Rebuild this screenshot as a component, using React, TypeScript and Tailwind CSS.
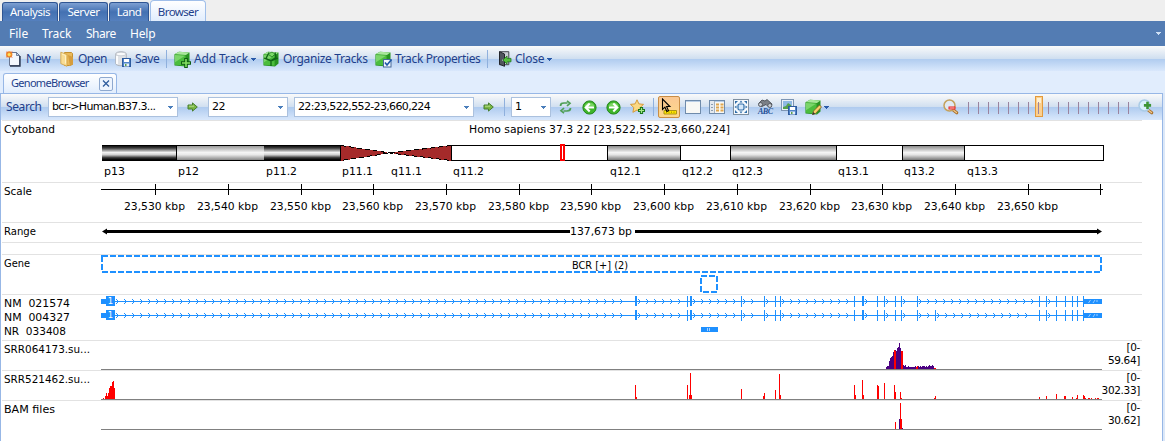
import React from "react";

type Kids = { children?: React.ReactNode };

const UI = "font-['Noto_Sans','Open_Sans',sans-serif]";
const CHART_FONT = "'DejaVu Sans', sans-serif";
const BLUE = "#1e90ff";

/* ---------- icons ---------- */

function NewIcon() {
  return (
    <svg width="16" height="16" viewBox="0 0 16 16">
      <path d="M3.5 1.5h7l3 3v10h-10z" fill="#f4f8fe" stroke="#6a7690" />
      <path d="M14 5v10H4" fill="none" stroke="#2c3850" strokeWidth="1.4" />
      <path d="M10.5 1.5v3h3z" fill="#c3d3ea" stroke="#5c6a86" strokeWidth=".8" />
      <circle cx="3.2" cy="3.4" r="3.2" fill="#f08a2c" />
      <circle cx="3.2" cy="3.4" r="1.5" fill="#ffe45c" />
      <path d="M0 0.5l1 1M6 0.5l-1 1M0 6.5l1-1M6 6.5l-1-1" stroke="#e0442a" />
    </svg>
  );
}
function OpenIcon() {
  return (
    <svg width="14" height="16" viewBox="0 0 14 16">
      <path d="M4.5 1.5h7l1 1v11l-3 1h-5z" fill="#e9b95a" stroke="#c4902f" />
      <path d="M8 4l5 2v7l-3 2z" fill="#d69d3c" />
      <path d="M.8 1.2l6.2 2.3v11.8L.8 12.6z" fill="#f8dc94" stroke="#d0a146" strokeWidth=".8" />
      <path d="M2 3l3.5 1.5v8" fill="none" stroke="#fff2c4" />
    </svg>
  );
}
function Floppy({ x, y }: { x: number; y: number }) {
  return (
    <g transform={`translate(${x} ${y})`}>
      <rect x=".5" y=".5" width="8" height="8" fill="#4f84c8" stroke="#2d5b9f" />
      <rect x="2" y="1" width="5" height="3" fill="#fff" />
      <rect x="2" y="5.5" width="5" height="3" fill="#e5eef9" />
      <rect x="3" y="6" width="1.5" height="2" fill="#5aa04c" />
    </g>
  );
}
function SaveIcon() {
  return (
    <svg width="16" height="16" viewBox="0 0 16 16">
      <path d="M.7 3c0-3 10.600-3 10.600 0v9.500c0 3-10.600 3-10.600 0z" fill="#dfe2e6" stroke="#a6abb3" strokeWidth=".8" />
      <path d="M2 5v8" stroke="#fff" strokeWidth="1.8" />
      <ellipse cx="6" cy="3" rx="4.8" ry="1.8" fill="#f9fafb" stroke="#b7bcc4" strokeWidth=".6" />
      <Floppy x={7} y={7} />
    </svg>
  );
}
function Cube({ kind }: { kind: "add" | "organize" | "check" | "edit" }) {
  return (
    <svg width="17" height="17" viewBox="0 0 17 17">
      <path d="M.5 3.2L5 .8l10.5.7v11L12 15.5l-11.5-1z" fill="#279321" />
      <path d="M.5 3.2L5 .8l10.5.7-3.6 2.6z" fill="#a9e79b" />
      <path d="M.8 3.6l10.8.8v10.4L.8 13.8z" fill="#4bbd3d" />
      <path d="M1 4l10 .7-10 6.5z" fill="#87db76" opacity=".8" />
      {kind === "add" && <path d="M12 7v10M7 12h10" stroke="#0e5c12" strokeWidth="3.6" />}
      {kind === "add" && <path d="M12 8v8M8 12h8" stroke="#86e164" strokeWidth="1.6" />}
      {kind === "organize" && (
        <g>
          <path d="M6 1.5l-3 6 5 2 5-3-1-5M8 9.5V15M1 7l7 3 7-3" stroke="#0f6515" strokeWidth="1.3" fill="none" />
          <path d="M5 3l4-2 3 2-3 3z" fill="#7bdb68" stroke="#14701a" strokeWidth=".7" />
        </g>
      )}
      {kind === "check" && (
        <g>
          <rect x="8.5" y="8.5" width="7.5" height="7.5" fill="#f2f7fd" stroke="#47689a" />
          <path d="M10 11.5l2 2.5 4.5-5.5" stroke="#1f57a8" strokeWidth="1.6" fill="none" />
        </g>
      )}
      {kind === "edit" && (
        <g>
          <path d="M7.5 15.5l1-3.5 6-6 2 2-6 6.5z" fill="#f6d06a" stroke="#7c5a1e" strokeWidth=".8" />
          <path d="M7.3 16l1-3 1.8 1.8z" fill="#333" />
        </g>
      )}
    </svg>
  );
}
function DoorIcon() {
  return (
    <svg width="14" height="16" viewBox="0 0 14 16">
      <path d="M1.5.7h9.300v13H1.5z" fill="#c8ccd2" stroke="#43474e" />
      <path d="M1.5.7l5 2.3v12.3l-5-2z" fill="#50555e" stroke="#22252b" />
      <path d="M5 8.5v1.4" stroke="#fff" />
      <path d="M5 9l4-4v2.400h4v3.400H9V13z" fill="#55c03c" stroke="#1f7a1b" strokeWidth=".8" />
    </svg>
  );
}
function GoIcon() {
  return (
    <svg width="12" height="10" viewBox="0 0 12 10">
      <path d="M1 3h4.500V.9L10.300 5 5.500 9.100V7H1z" fill="#79b644" stroke="#477f2d" />
      <path d="M2 4.200h5" stroke="#b6dc8a" />
    </svg>
  );
}
function RefreshIcon() {
  return (
    <svg width="13" height="14" viewBox="0 0 13 14">
      <path d="M1.500 6C1.500 3.500 3 3 5 3h3.500M8 .8l3 2.400-3 2.800" fill="none" stroke="#4f9f56" strokeWidth="1.700" />
      <path d="M11.500 8c0 2.500-1.500 3-3.500 3H4.500M5 13.200l-3-2.400 3-2.800" fill="none" stroke="#4f9f56" strokeWidth="1.700" />
    </svg>
  );
}
function RoundArrow({ left }: { left?: boolean }) {
  return (
    <svg width="15" height="15" viewBox="0 0 15 15">
      <circle cx="7.5" cy="7.500" r="6.600" fill="#3fb52b" stroke="#23871a" />
      <path d="M2.500 6c1-4.500 9-4.500 10 0-3 1.600-7 1.600-10 0z" fill="#8ee074" opacity=".75" />
      <path
        d={left ? "M12 7.500H4M7.700 3.500L3.700 7.500l4 4" : "M3 7.500h8M7.300 3.500l4 4-4 4"}
        stroke="#fff"
        strokeWidth="2.100"
        fill="none"
      />
    </svg>
  );
}
function StarIcon() {
  return (
    <svg width="16" height="16" viewBox="0 0 16 16">
      <path d="M7 .8l1.900 4.100 4.600.5-3.400 3.200.9 4.700L7 11l-4.100 2.300.9-4.700L.5 5.400l4.600-.5z" fill="#fbd983" stroke="#d79b37" />
      <path d="M11.500 8v7M8 11.500h7" stroke="#17761a" strokeWidth="3.200" />
      <path d="M11.500 9v5M9 11.500h5" stroke="#a5e88b" strokeWidth="1.200" />
    </svg>
  );
}
function PointerIcon() {
  return (
    <svg width="18" height="18" viewBox="0 0 18 18">
      <path d="M4 12.500h12.500v3.500H4z" fill="#ffe600" stroke="#ab941b" />
      <path d="M6.500 13.500v1.500M9 13.500v1.500M11.500 13.500v1.500M14 13.500v1.500" stroke="#b8a000" />
      <path d="M2.500 1v10.500l2.400-2.300 2 4.300 1.600-.8-1.900-4.200h3.300z" fill="#f7c88c" stroke="#000" strokeWidth="1.100" />
    </svg>
  );
}
function WindowIcon({ list }: { list?: boolean }) {
  return (
    <svg width="16" height="14" viewBox="0 0 16 14">
      <rect x=".5" y=".5" width="15" height="13" fill="#f8f8f5" stroke="#6f8bab" />
      <path d="M1 1.500h14" stroke="#b9cee6" />
      {list && <path d="M1 1h4v12H1z" fill="#e4e9ef" />}
      {list && <path d="M5.500 1v12" stroke="#a5b3c2" />}
      {list && <path d="M2 4.500h2M2 7.500h2M2 10.500h2" stroke="#8e9fb1" />}
      {list && <path d="M7 4.500h3M11.500 4.500h3M7 7.500h3M11.500 7.500h3M7 10.500h3M11.500 10.500h3" stroke="#e0a64e" strokeWidth="2" />}
    </svg>
  );
}
function FitIcon() {
  return (
    <svg width="16" height="16" viewBox="0 0 16 16">
      <rect x=".5" y=".5" width="15" height="15" fill="#f5f9fd" stroke="#7f8f9f" />
      <rect x="5" y="5" width="6" height="6" rx="1.500" fill="#d5e8fa" stroke="#2e6da8" strokeWidth="1.200" />
      <path d="M2 2h3L2 5zM14 2v3l-3-3zM2 14v-3l3 3zM14 14h-3l3-3zM8 1.500l1.500 2h-3zM8 14.500l1.500-2h-3zM1.500 8l2-1.500v3zM14.500 8l-2-1.500v3z" fill="#2e6da8" />
    </svg>
  );
}
function FindIcon() {
  return (
    <svg width="17" height="16" viewBox="0 0 17 16">
      <path d="M2 4l3-3 3 1 2-1.500L15 5l-1 3-3-.5-2-2-4 2-3-1z" fill="#7b8087" stroke="#3c4046" strokeWidth=".8" />
      <circle cx="3.500" cy="5.500" r="2" fill="#c7ccd2" stroke="#4a4e55" strokeWidth=".8" />
      <circle cx="12.800" cy="6.500" r="2" fill="#c7ccd2" stroke="#4a4e55" strokeWidth=".8" />
      <text x="1" y="15.300" fontFamily="'Liberation Serif', serif" fontSize="8" fontWeight="700" fontStyle="italic" fill="#1f4f96" textLength="15">ABC</text>
    </svg>
  );
}
function SavePictureIcon() {
  return (
    <svg width="16" height="16" viewBox="0 0 16 16">
      <rect x=".5" y=".5" width="12" height="11" fill="#e9f0f8" stroke="#7d95b3" />
      <rect x="2" y="2" width="9" height="8" fill="#8fb9e4" />
      <path d="M2 10V8l3-1 2-3 3 2 1 4z" fill="#55a04b" />
      <Floppy x={7} y={7} />
    </svg>
  );
}
function ZoomIcon({ plus }: { plus?: boolean }) {
  return (
    <svg width="16" height="16" viewBox="0 0 16 16">
      <path d="M10.500 11.300l3.300 2.500" stroke="#a9712c" strokeWidth="3" strokeLinecap="round" />
      <path d="M10.800 11.500l2.700 2" stroke="#f2c98d" strokeWidth="1.300" strokeLinecap="round" />
      <circle cx="6.500" cy="6.500" r="5.500" fill={plus ? "#d9effb" : "#e1e9f2"} stroke={plus ? "#a9cbe6" : "#c4a15c"} strokeWidth="1.500" />
      {plus ? (
        <path d="M9.500 2.800v7.200M5.900 6.400h7.200" stroke="#3d9434" strokeWidth="2.600" />
      ) : (
        <g>
          <rect x="5.500" y="7.500" width="7" height="3" fill="#e82020" />
          <path d="M6.500 9h5" stroke="#ffc4c4" />
        </g>
      )}
    </svg>
  );
}
function Caret({ color = "#2a5aa8" }: { color?: string }) {
  return (
    <svg width="5" height="3" viewBox="0 0 5 3" shapeRendering="crispEdges">
      <path d="M0 0h5v1H4v1H3v1H2V2H1V1H0z" fill={color} />
    </svg>
  );
}

/* ---------- chrome ---------- */

function Tab({ cls, children }: Kids & { cls: string }) {
  return (
    <div className={`h-[19px] rounded-t-[3px] border border-b-0 border-[#2f5593] bg-linear-to-b from-[#7d9fd2] via-[#4471b2] to-[#5580be] text-center text-[11.5px] leading-[18px] text-white ${cls}`}>
      {children}
    </div>
  );
}
function Tool({ icon, iconW, cls, label, caret }: { icon: React.ReactNode; iconW: string; cls: string; label: string; caret?: boolean }) {
  return (
    <div className={`flex shrink-0 items-center whitespace-nowrap ${cls}`}>
      <span className={`shrink-0 ${iconW}`}>{icon}</span>
      <span>{label}</span>
      {caret && <span className="ml-[3px]"><Caret /></span>}
    </div>
  );
}
function Separator({ cls }: { cls: string }) {
  return <div className={`h-[18px] w-px shrink-0 bg-[#8fb0dd] ${cls}`} />;
}
function Combo({ cls, children }: Kids & { cls: string }) {
  return (
    <div className={`flex h-[20px] shrink-0 items-center justify-between border border-[#abc1de] bg-white pr-[4px] pl-[3px] font-['DejaVu_Sans',sans-serif] text-[11px] text-black ${cls}`}>
      <span className="whitespace-nowrap">{children}</span>
      <Caret color="#4a7ebb" />
    </div>
  );
}
function Slot({ cls, children }: Kids & { cls: string }) {
  return <div className={`flex shrink-0 items-center ${cls}`}>{children}</div>;
}

/* ---------- tracks ---------- */

type LabelProps = { x: number; y: number; w: number; children: string };
function Label({ x, y, w, children }: LabelProps) {
  return (
    <text x={x} y={y} textLength={w} lengthAdjust="spacingAndGlyphs" fontSize="11" fontFamily={CHART_FONT} fill="#000">
      {children}
    </text>
  );
}

/* Track drawings use window x coordinates; `top` is the track's first row. */
function Track({ top, h, cls, aside, children }: Kids & { top: number; h: number; cls: string; aside?: React.ReactNode }) {
  const w = aside ? 1100 : 1140;
  return (
    <div className={`flex w-[1140px] border-t border-[#e2e2e2] ${cls}`}>
      <svg className="block shrink-0" width={w} height={h - 1} viewBox={`2 ${top + 1} ${w} ${h - 1}`} shapeRendering="crispEdges">
        {children}
      </svg>
      {aside}
    </div>
  );
}

const bands: [number, number, string][] = [
  [102, 176, "dark"], [176, 264, "light"], [264, 341, "dark"], [451, 607, "none"], [607, 680, "mid"],
  [680, 730, "none"], [730, 836, "mid"], [836, 902, "none"], [902, 964, "mid"], [964, 1103, "none"],
];
const bandLabels: [number, string, number][] = [
  [104, "p13", 21], [178, "p12", 21], [266, "p11.2", 31], [342, "p11.1", 31], [391, "q11.1", 31], [453, "q11.2", 31], [610, "q12.1", 31],
  [682, "q12.2", 31], [732, "q12.3", 31], [838, "q13.1", 31], [904, "q13.2", 31], [967, "q13.3", 31],
];
const ticks = [155, 228, 301, 373, 446, 519, 591, 664, 737, 810, 882, 955, 1028];

const exons: [number, number][] = [
  [635, 2], [687, 1], [690, 2], [741, 1], [764, 1], [775, 1], [780, 1], [854, 1], [862, 2], [877, 1], [884, 1], [895, 1],
  [901, 1], [917, 1], [935, 1], [1039, 1], [1046, 1], [1056, 1], [1065, 1], [1072, 1], [1077, 1], [1083, 1],
];

function Transcript({ y, list }: { y: number; list: [number, number][] }) {
  const arrows: number[] = [];
  let start = 115;
  for (const [x, w] of list) {
    for (let tip = start + 3; tip <= x - 6; tip += 8) arrows.push(tip);
    start = x + w;
  }
  return (
    <g fill={BLUE}>
      <rect x="101" y={y} width="1001" height="1" />
      <rect x="101" y={y - 2} width="5" height="5" />
      <rect x="106" y={y - 5} width="9" height="10" />
      <text x="110.500" y={y + 3} fontSize="8.500" textAnchor="middle" fontFamily={CHART_FONT} fill="#fff">1</text>
      {arrows.map((a) => (
        <path key={a} d={`M${a - 2} ${y - 2}h1v1h1v1h-1v-1h-1zM${a - 2} ${y + 3}h1v-1h1v-1h-1v1h-1z`} />
      ))}
      {list.map(([x, w]) => (
        <rect key={x} x={x} y={y - 5} width={w} height={w === 2 ? 10 : 11} />
      ))}
      <rect x="1084" y={y - 2} width="18" height="5" />
      <path d={`M1088.500 ${y + 2}l2-3M1093 ${y + 2}l2-3M1096 ${y}h2`} stroke="#b9dcff" strokeWidth=".8" shapeRendering="auto" />
    </g>
  );
}

type Bars = [number, number][];
function Histogram({ base, data, fill }: { base: number; data: Bars; fill: string }) {
  return (
    <g fill={fill}>
      {data.map(([x, h]) => (
        <rect key={x} x={x} y={base - h} width="1" height={h} />
      ))}
    </g>
  );
}
const PURPLE = "#4b0082";
const seq = (start: number, hs: number[]): Bars => hs.map((h, i) => [start + i, h]);

const srr1 = seq(886, [2, 3, 3, 8, 11, 12, 13, 17, 19, 19, 18, 21, 22, 26, 21, 18, 18, 4, 3, 4, 2, 2, 3, 2, 2, 2, 2, 2, 2, 3, 2, 2, 3, 2, 3, 2, 3, 3, 3, 2, 3, 2, 3, 4, 3, 3, 4, 3, 2, 2, 1]).slice(0, 48);
const srr1Red: Bars = [[894, 19], [895, 18], [901, 18], [902, 18], [916, 2], [917, 3], [934, 1], [935, 1]];
const srr2: Bars = [
  [103, 1], ...seq(105, [3, 6, 3, 6, 11, 13, 13, 17, 18, 11]), [635, 14], [636, 2], [687, 14], [689, 4], [690, 26], [691, 4],
  [741, 10], [763, 3], [764, 6], [775, 9], [779, 25], [780, 4], [854, 14], [855, 4], [862, 19], [863, 4], [877, 14], [878, 13],
  [884, 16], [894, 14], [895, 7], [900, 7], [901, 1], [934, 1], [935, 3], [1039, 2], [1046, 3], [1056, 5], [1064, 3], [1065, 3],
  [1072, 2], [1076, 1], [1077, 4], [1083, 4], [1084, 3], [1085, 1], [1088, 1], [1089, 1], [1091, 1], [1095, 1], [1097, 1], [1098, 1],
];
const bamRed: Bars = [[895, 7], [900, 26], [901, 10]];
const bamPurple: Bars = [[899, 10], [902, 1]];

function Coverage({ top, name, w, low, high, children }: Kids & { top: number; name: string; w: number; low: string; high: string }) {
  const scale = (
    <div className="flex w-[38px] flex-col items-end font-['DejaVu_Sans',sans-serif] text-[10.5px] leading-[13px] tracking-[-0.35px] text-black">
      <span>{low}</span>
      <span>{high}</span>
    </div>
  );
  return (
    <Track top={top} h={30} cls="h-[30px]" aside={scale}>
      <Label x={4} y={top + 13} w={w}>{name}</Label>
      {children}
      <rect x="101" y={top + 29} width="1001" height="1" fill="#808080" />
    </Track>
  );
}

function Tracks() {
  return (
    <div className="flex w-[1140px] flex-col">
      <Track top={120} h={62} cls="h-[62px]">
        <defs>
          <linearGradient id="dark" x1="0" x2="0" y1="0" y2="1">
            <stop offset="0" stopColor="#000" /><stop offset=".2" stopColor="#3c3c3c" /><stop offset=".5" stopColor="#f2f2f2" />
            <stop offset=".65" stopColor="#d0d0d0" /><stop offset=".85" stopColor="#333" /><stop offset="1" stopColor="#000" />
          </linearGradient>
          <linearGradient id="light" x1="0" x2="0" y1="0" y2="1">
            <stop offset="0" stopColor="#8c8c8c" /><stop offset=".5" stopColor="#f4f4f4" /><stop offset=".65" stopColor="#e8e8e8" /><stop offset="1" stopColor="#858585" />
          </linearGradient>
          <linearGradient id="mid" x1="0" x2="0" y1="0" y2="1">
            <stop offset="0" stopColor="#7c7c7c" /><stop offset=".5" stopColor="#f4f4f4" /><stop offset=".65" stopColor="#e4e4e4" /><stop offset="1" stopColor="#787878" />
          </linearGradient>
        </defs>
        <Label x={4} y={133} w={51}>Cytoband</Label>
        <Label x={469} y={133} w={261}>Homo sapiens 37.3 22 [23,522,552-23,660,224]</Label>
        {bands.map(([a, b, f]) => (
          <g key={a}>
            {f !== "none" && <rect x={a} y="145" width={b - a} height="15" fill={`url(#${f})`} />}
            <rect x={a} y="145" width={b - a} height="1" fill="#000" />
            <rect x={a} y="160" width={b - a} height="1" fill="#000" />
            {a !== 102 && a !== 264 && <rect x={a} y="145" width="1" height="16" fill="#000" />}
          </g>
        ))}
        <rect x="340" y="145" width="1" height="16" fill="#000" />
        <rect x="1103" y="145" width="1" height="16" fill="#000" />
        <path d="M341 145L390 153L451 145V161L390 153L341 161z" fill="#a52a2a" />
        <path d="M341 145.500L390 153L451 160.500M451 145.500L390 153L341 160.500" fill="none" stroke="#000" strokeDasharray="5 3" />
        <rect x="561" y="145" width="3" height="15" fill="#fff" stroke="#f00" strokeWidth="2" />
        {bandLabels.map(([x, t, w]) => (
          <Label key={t} x={x} y={175} w={w}>{t}</Label>
        ))}
      </Track>

      <Track top={182} h={40} cls="h-[40px]">
        <Label x={4} y={195} w={28}>Scale</Label>
        <rect x="101" y="189" width="1002" height="1" fill="#000" />
        {[...ticks, 1100].map((x) => (
          <rect key={x} x={x} y="184" width="1" height="11" fill="#000" />
        ))}
        {ticks.map((x, i) => (
          <Label key={x} x={x - 31} y={210} w={61}>{`23,${530 + i * 10} kbp`}</Label>
        ))}
      </Track>

      <Track top={222} h={20} cls="h-[20px]">
        <Label x={4} y={235} w={32}>Range</Label>
        <rect x="105" y="230" width="465" height="3" fill="#000" />
        <rect x="635" y="230" width="464" height="3" fill="#000" />
        <path d="M102 231.500l5-3v6zM1102 231.500l-5-3v6z" fill="#000" shapeRendering="auto" />
        <Label x={570} y={235} w={62}>137,673 bp</Label>
      </Track>
      <Track top={242} h={12} cls="h-[12px]" />

      <Track top={254} h={40} cls="h-[40px]">
        <Label x={4} y={267} w={26}>Gene</Label>
        <rect x="102" y="256" width="999" height="16" fill="none" stroke={BLUE} strokeWidth="2" strokeDasharray="6 2" />
        <rect x="701" y="276" width="16" height="16" fill="none" stroke={BLUE} strokeWidth="2" strokeDasharray="6 2" />
        <Label x={572} y={269} w={56}>BCR [+] (2)</Label>
      </Track>

      <Track top={294} h={46} cls="h-[46px]">
        <Label x={4} y={307} w={66}>{"NM\u00a0\u00a0021574"}</Label>
        <Label x={4} y={321} w={66}>{"NM\u00a0\u00a0004327"}</Label>
        <Label x={4} y={335} w={62}>{"NR\u00a0\u00a0033408"}</Label>
        <Transcript y={301} list={exons.filter(([x]) => x !== 935)} />
        <Transcript y={315} list={exons} />
        <rect x="701" y="327" width="17" height="5" fill={BLUE} />
        <path d="M707 328h1v3h-1zM709 328h1v3h-1z" fill="#a9d3ff" />
      </Track>

      <Coverage top={340} name="SRR064173.su..." w={86} low="[0-" high="59.64]">
        <Histogram base={369} data={srr1} fill={PURPLE} />
        <Histogram base={369} data={srr1Red} fill="#f00" />
      </Coverage>
      <Coverage top={370} name="SRR521462.su..." w={86} low="[0-" high="302.33]">
        <Histogram base={399} data={srr2} fill="#f00" />
      </Coverage>
      <Coverage top={400} name="BAM files" w={51} low="[0-" high="30.62]">
        <Histogram base={429} data={bamRed} fill="#f00" />
        <Histogram base={429} data={bamPurple} fill={PURPLE} />
      </Coverage>
    </div>
  );
}

const bar = "bg-[linear-gradient(#fafafa_0%,#d0dff0_50%,#afcbef_51%,#d9e8fc_100%)]";

export default function App() {
  return (
    <div className={`flex h-[441px] w-[1165px] flex-col overflow-hidden bg-[#e1edfd] text-[12px] text-[#1e3f8b] ${UI}`}>
      <div className="flex h-[21px] items-end gap-px bg-[#efefef] pl-[2px]">
        <Tab cls="w-[56px] tracking-[-0.45px]">Analysis</Tab>
        <Tab cls="w-[49px] tracking-[-0.4px]">Server</Tab>
        <Tab cls="w-[40px] tracking-[-0.5px]">Land</Tab>
        <div className="h-[21px] w-[56px] rounded-t-[4px] border border-b-0 border-[#a0bfea] bg-linear-to-b from-white to-[#e1edfd] text-center text-[11.5px] leading-[21px] tracking-[-0.6px]">
          Browser
        </div>
      </div>

      <div className="flex h-[25px] items-center bg-[#537cb3] pl-[9px] text-white">
        <span className="w-[33px]">File</span>
        <span className="w-[44px] tracking-[-0.1px]">Track</span>
        <span className="w-[44px] tracking-[-0.5px]">Share</span>
        <span className="tracking-[-0.2px]">Help</span>
        <span className="mr-1 ml-auto"><Caret color="#cfe0f5" /></span>
      </div>

      <div className={`flex h-[25px] shrink-0 items-center pt-px pl-[6px] ${bar}`}>
        <Tool icon={<NewIcon />} iconW="w-[20px]" cls="w-[54px] tracking-[-0.2px]" label="New" />
        <Tool icon={<OpenIcon />} iconW="w-[18px]" cls="w-[55px] tracking-[-0.5px]" label="Open" />
        <Tool icon={<SaveIcon />} iconW="w-[20px]" cls="w-[51px] tracking-[-0.5px]" label="Save" />
        <Separator cls="mr-[7px]" />
        <Tool icon={<Cube kind="add" />} iconW="w-[20px]" cls="w-[89px] tracking-[-0.15px]" label="Add Track" caret />
        <Tool icon={<Cube kind="organize" />} iconW="w-[20px]" cls="w-[112px] tracking-[-0.35px]" label="Organize Tracks" />
        <Tool icon={<Cube kind="check" />} iconW="w-[20px]" cls="w-[112px] tracking-[-0.35px]" label="Track Properties" />
        <Separator cls="mr-[10px]" />
        <Tool icon={<DoorIcon />} iconW="w-[17px]" cls="tracking-[-0.25px]" label="Close" caret />
      </div>

      <div className="flex h-[22px] shrink-0 items-end pl-[3px]">
        <div className="flex h-[20px] w-[114px] items-center rounded-t-[3px] border border-b-0 border-[#97b7e6] bg-linear-to-b from-white to-[#e1edfd] pl-[7px] text-[11px]">
          <span className="w-[88px] tracking-[-0.7px]">GenomeBrowser</span>
          <span className="flex h-[14px] w-[14px] items-center justify-center rounded-[2px] border border-[#8fa9cf] bg-[#edf4fe]">
            <svg width="8" height="7" viewBox="0 0 8 7"><path d="M1 .5l6 6M7 .5l-6 6" stroke="#2f5d9e" strokeWidth="1.300" /></svg>
          </span>
        </div>
      </div>

      <div className="flex min-h-0 flex-1">
        <div className="w-px shrink-0 bg-[#97b7e6]" />
        <div className="flex w-[1161px] shrink-0 flex-col border-t border-[#97b7e6] bg-white">
          <div className={`flex h-[26px] shrink-0 items-center pl-[5px] ${bar}`}>
            <span className="w-[42px] shrink-0 tracking-[-0.4px]">Search</span>
            <Combo cls="w-[130px] tracking-[-0.65px]">bcr-&gt;Human.B37.3...</Combo>
            <Slot cls="ml-[9px] w-[21px]"><GoIcon /></Slot>
            <Combo cls="w-[80px] tracking-[-0.5px]">22</Combo>
            <Combo cls="ml-[6px] w-[180px] tracking-[-0.65px]">22:23,522,552-23,660,224</Combo>
            <Slot cls="ml-[9px] w-[21px]"><GoIcon /></Slot>
            <Separator cls="mr-[6px]" />
            <Combo cls="w-[40px]">1</Combo>
            <Slot cls="ml-[8px] w-[23px]"><RefreshIcon /></Slot>
            <Slot cls="w-[24px]"><RoundArrow left /></Slot>
            <Slot cls="w-[24px]"><RoundArrow /></Slot>
            <Slot cls="w-[23px]"><StarIcon /></Slot>
            <Separator cls="mr-[4px]" />
            <div className="mr-[5px] flex h-[22px] w-[22px] shrink-0 items-center justify-center rounded-[2px] border border-[#c98d45] bg-linear-to-b from-[#fbc893] to-[#fdd98c]">
              <PointerIcon />
            </div>
            <Slot cls="w-[24px]"><WindowIcon /></Slot>
            <Slot cls="w-[24px]"><WindowIcon list /></Slot>
            <Slot cls="w-[24px]"><FitIcon /></Slot>
            <Slot cls="w-[24px]"><FindIcon /></Slot>
            <Slot cls="w-[24px]"><SavePictureIcon /></Slot>
            <Slot cls="w-[19px]"><Cube kind="edit" /></Slot>
            <Caret />
            <div className="mr-[8px] ml-auto flex items-center">
              <ZoomIcon />
              <svg className="ml-[7px]" width="165" height="24" viewBox="966 95 165 24" shapeRendering="crispEdges">
                <rect x="1035.500" y="96.500" width="7" height="20" rx="1" fill="#fbcf8e" stroke="#e39a3c" />
                <rect x="1037" y="98" width="4" height="5" fill="#fff0d0" />
                {Array.from({ length: 17 }, (_, i) => (
                  <rect key={i} x={968 + i * 10} y="102" width="1" height="12" fill="#9a839f" />
                ))}
              </svg>
              <span className="ml-[7px]"><ZoomIcon plus /></span>
            </div>
          </div>
          <div className="pl-px"><Tracks /></div>
        </div>
        <div className="w-px bg-[#97b7e6]" />
        <div className="flex-1 bg-[#dce8f8]" />
      </div>
    </div>
  );
}
